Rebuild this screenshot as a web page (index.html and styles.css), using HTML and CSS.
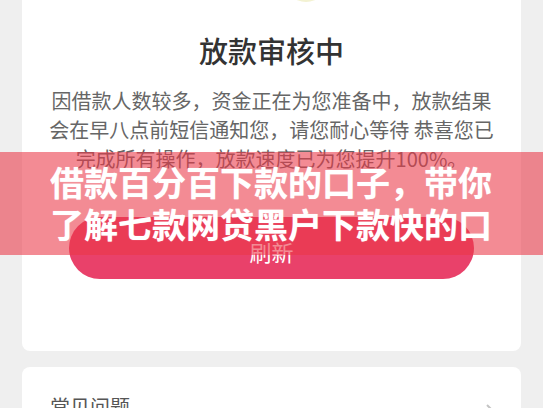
FILE: index.html
```html
<!DOCTYPE html>
<html lang="zh-CN">
<head>
<meta charset="utf-8">
<title>放款审核中</title>
<link rel="stylesheet" href="styles.css">
</head>
<body>
<div class="page">
  <section class="card status">
    <div class="icon">
      <svg width="46" height="63" viewBox="0 0 46 63"><ellipse cx="23" cy="40" rx="22" ry="22" fill="#f3f2d2"/></svg>
    </div>
    <h1 class="title">放款审核中</h1>
    <p class="desc">因借款人数较多，资金正在为您准备中，放款结果会在早八点前短信通知您，请您耐心等待 恭喜您已完成所有操作，放款速度已为您提升100%。</p>
    <button class="btn">刷新</button>
  </section>
  <section class="card faq">
    <span class="faq-label">常见问题</span>
    <svg class="chev" width="12" height="20" viewBox="0 0 12 20"><path d="M2 2 L10 10 L2 18" fill="none" stroke="#c4c4c4" stroke-width="2"/></svg>
  </section>
</div>
<div class="banner">
  <p class="banner-text">借款百分百下款的口子，带你了解七款网贷黑户下款快的口子</p>
</div>
</body>
</html>
```
FILE: styles.css
```css
html, body {
  margin: 0;
  padding: 0;
  background: #efefef;
  font-family: "Noto Sans CJK SC", "Noto Sans", sans-serif;
  overflow: hidden;
}
.page {
  padding: 0 22px;
  display: flex;
  flex-direction: column;
  gap: 16px;
}
.card {
  background: #fff;
  border-radius: 8px;
}
.status {
  margin-top: -60px;
  padding: 0 24px 72px;
  display: flex;
  flex-direction: column;
  align-items: center;
}
.icon {
  height: 62px;
  display: flex;
  justify-content: center;
  padding-left: 68px;
}
.icon svg { display: block; }
.title {
  margin: 28px 0 0;
  font-size: 29px;
  line-height: 40px;
  font-weight: 500;
  color: #333;
}
.desc {
  margin: 16px 0 0;
  font-size: 20px;
  line-height: 29px;
  color: #666;
  text-align: center;
  width: 451px;
}
.btn {
  margin-top: 44px;
  width: 405px;
  height: 62px;
  border: 0;
  border-radius: 31px;
  background: #e9416a;
  color: #fff;
  font-family: inherit;
  font-size: 22px;
  padding-top: 6px;
}
.faq {
  padding: 24px 24px 24px 28px;
  display: flex;
  align-items: center;
  justify-content: space-between;
}
.faq-label {
  font-size: 20px;
  line-height: 28px;
  color: #555;
}
.chev { display: block; margin-top: 12px; }
.banner {
  position: absolute;
  left: 0;
  right: 0;
  top: 152px;
  height: 103px;
  background: rgba(234, 55, 70, 0.58);
  padding: 9px 50px 0;
  box-sizing: border-box;
}
.banner-text {
  margin: 0;
  color: #fff;
  font-weight: 700;
  font-size: 34px;
  line-height: 42px;
  height: 84px;
  overflow: hidden;
  text-shadow: 0 0 1px rgba(255,255,255,0.6);
}
```
